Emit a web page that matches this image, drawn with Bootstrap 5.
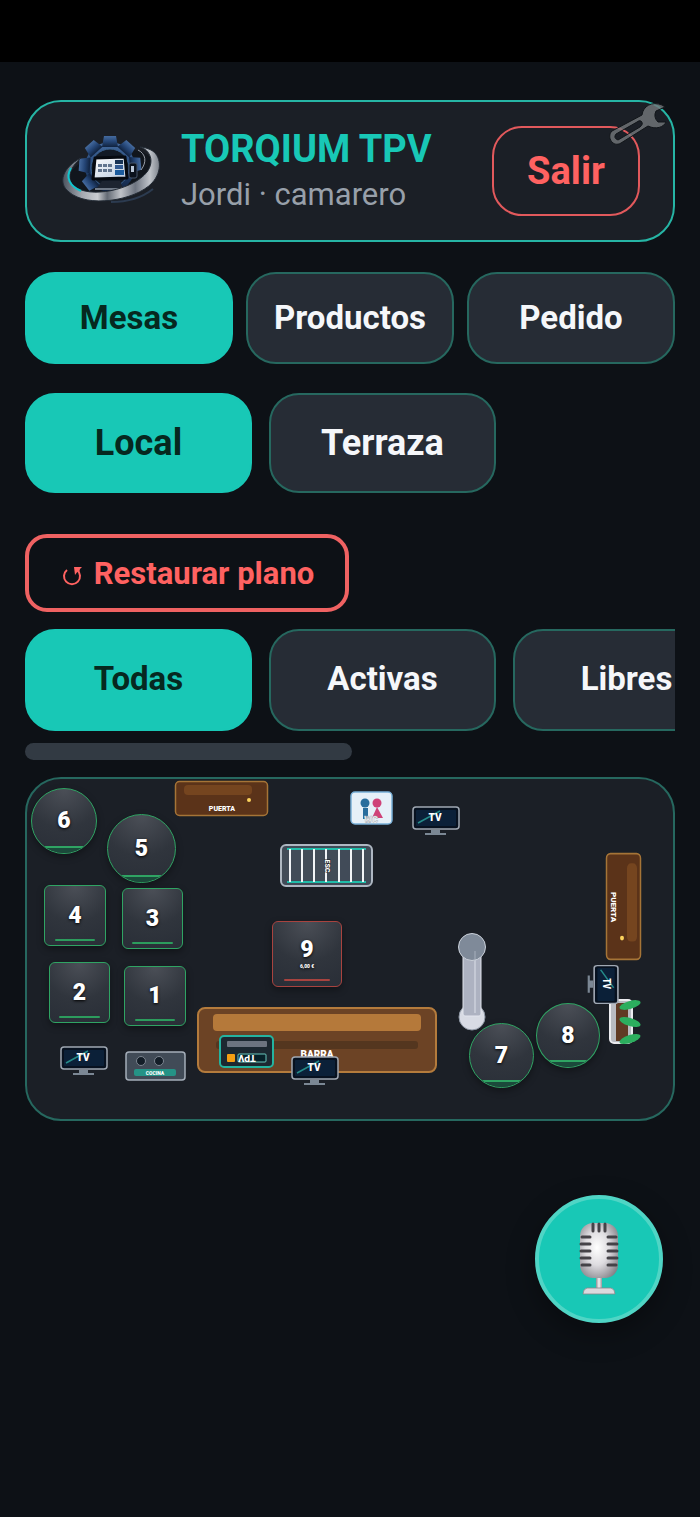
<!DOCTYPE html>
<html lang="es">
<head>
<meta charset="utf-8">
<meta name="viewport" content="width=device-width, initial-scale=1">
<title>TORQIUM TPV</title>
<link href="https://cdn.jsdelivr.net/npm/bootstrap@5.3.0/dist/css/bootstrap.min.css" rel="stylesheet">
<style>
  :root { --teal:#18c8b6; --red:#ff6261; --panel:#1b1f26; --btn:#262c35; --line:#26685f; }
  body { background:#0d1116; color:#f5f7fa; font-family:Roboto,"Liberation Sans",sans-serif; }
  .status-strip { height:62px; background:#000; }
  .page-body { padding:38px 25px 0; }
  .brand-bar { background:var(--panel); border:2px solid #26b5a5; border-radius:36px; padding:0 33px 0 34px; height:142px; margin-bottom:30px; }
  .brand-logo { width:100px; height:90px; flex:none; }
  .brand-title { color:var(--teal); font-size:38px; font-weight:700; line-height:44px; padding-top:4px; }
  .brand-user { color:#98a0aa; font-size:31px; line-height:48px; }
  .exit-btn { height:90px; width:148px; border:2px solid #e2595c; border-radius:30px; color:var(--red); font-size:38px; font-weight:700; padding:0; }
  .exit-btn:hover, .restore-btn:hover { color:var(--red); border-color:var(--red); }
  .wrench { top:0; right:4px; width:64px; height:50px; pointer-events:none; }
  .tile { background:var(--btn); border:2px solid var(--line); border-radius:30px; color:#f5f7fa; font-weight:700; padding:0; white-space:nowrap; }
  .tile:hover { background:var(--btn); border-color:var(--line); color:#f5f7fa; }
  .tile.active, .tile.active:hover { background:var(--teal); border-color:var(--teal); color:#06281f; }
  .main-tabs { gap:13px; margin-bottom:29px; }
  .main-tabs .tile { height:92px; font-size:33px; flex:1 1 0; }
  .pill-row { gap:17px; }
  .pill-row .tile { width:227px; flex:none; font-size:33px; }
  .zones { margin-bottom:41px; }
  .zones .tile { height:100px; font-size:36px; }
  .restore-btn { height:78px; width:324px; border:4px solid #ef6262; border-radius:22px; color:var(--red); font-size:31px; font-weight:700; margin-bottom:17px; padding:2px 0 0 2px; }
  .filters { overflow-x:auto; scrollbar-width:none; }
  .filters::-webkit-scrollbar { display:none; }
  .filters .tile { height:102px; padding-bottom:2px; }
  .scroll-thumb { width:327px; height:17px; border-radius:9px; background:#323a43; margin:12px 0 17px; }
  .floor { border:2px solid var(--line); border-radius:36px; background:var(--panel); height:344px; overflow:hidden; }
  .floor svg { width:646px; height:340px; }
  .floor text { font-family:Roboto,"Liberation Sans",sans-serif; font-weight:900; fill:#fff; text-anchor:middle; }
  .seat { position:absolute; left:var(--x); top:var(--y); width:var(--w); height:var(--h); border:1px solid #2fa463; border-radius:6px; padding:0; overflow:hidden; color:#fff; font-size:23px; font-weight:900; line-height:24px; text-shadow:0 1px 3px #000; background:radial-gradient(circle at 50% 0,#4b4f57 0,#30353d 55%,#292e37 100%); box-shadow:0 3px 7px rgba(0,0,0,.35); }
  .seat::after { content:""; position:absolute; left:16%; right:16%; bottom:4px; height:2px; border-radius:2px; background:#2c9c5d; }
  .seat.round-seat { border-radius:50%; }
  .seat.round-seat::after { left:0; right:0; bottom:0; height:7px; border-radius:0; border-top:2px solid #2fa463; background:#1b4a3b; }
  .seat.busy { border-color:#a8433f; }
  .seat.busy::after { background:#a8433f; bottom:5px; }
  .seat small { display:block; font-size:5px; line-height:8px; }
  .mic-btn { right:37px; bottom:194px; width:128px; height:128px; border:4px solid #4fd5c5; background:var(--teal); box-shadow:0 10px 28px rgba(0,0,0,.35); }
</style>
</head>
<body>
<div class="status-strip"></div>
<main class="page-body">
  <header class="brand-bar d-flex align-items-center position-relative">
    <svg class="brand-logo" viewBox="0 0 100 90" aria-hidden="true">
      <defs>
        <linearGradient id="steel" x1="0" y1="0" x2="1" y2="0">
          <stop offset="0" stop-color="#4b535e"/><stop offset=".2" stop-color="#a4a9b1"/><stop offset=".36" stop-color="#c9ccd0"/><stop offset=".46" stop-color="#636a74"/><stop offset=".6" stop-color="#c0c3c8"/><stop offset=".75" stop-color="#6d7480"/><stop offset=".9" stop-color="#c0c4ca"/><stop offset="1" stop-color="#7d838c"/>
        </linearGradient>
        <linearGradient id="blue" x1="0" y1="0" x2="0" y2="1"><stop offset="0" stop-color="#456b9f"/><stop offset=".5" stop-color="#254677"/><stop offset="1" stop-color="#10223e"/></linearGradient>
        <linearGradient id="face" x1="0" y1="0" x2="1" y2="1"><stop offset="0" stop-color="#fff"/><stop offset="1" stop-color="#b8c8dc"/></linearGradient>
      </defs>
      <ellipse cx="50" cy="49" rx="45" ry="24" transform="rotate(-14 50 49)" fill="#11161d"/>
      <g transform="translate(0 3)">
        <g fill="url(#blue)">
          <circle cx="49" cy="38" r="25"/>
          <path d="M43 7h12l2 11H41z"/><path d="M43 7h12l2 11H41z" transform="rotate(42 49 38)"/>
          <path d="M43 7h12l2 11H41z" transform="rotate(84 49 38)"/><path d="M43 7h12l2 11H41z" transform="rotate(-42 49 38)"/>
          <path d="M43 7h12l2 11H41z" transform="rotate(-86 49 38)"/><path d="M43 7h12l2 11H41z" transform="rotate(-128 49 38)"/>
        </g>
        <circle cx="49" cy="39" r="19" fill="#121a25" stroke="#3a628f"/>
        <path d="M41 52h18l3 7H36z" fill="#1d2430"/><path d="M34 60h34" stroke="#707986" stroke-width="2"/>
        <rect x="68" y="34" width="8" height="15" rx="2" fill="#0b121d" stroke="#46556a"/>
        <path d="M70 37h3v6h-3z" fill="#b9c6d7"/>
        <path d="M34 29l30-1 2 21-34 1z" fill="url(#face)" stroke="#060a10" stroke-width="3" stroke-linejoin="round"/>
        <g fill="#62758e"><path d="M37 35h4v3h-4zM42 35h4v3h-4zM47 35h4v3h-4zM37 40h4v3h-4zM42 40h4v3h-4zM47 40h4v3h-4z"/><path d="M54 31h8v4h-8z" fill="#173253"/><path d="M54 36h8v4h-8z" fill="#315a92"/><path d="M54 41h9v5h-9z" fill="#1b5b9c"/></g>
      </g>
      <path d="M20 32C2 41-4 57 8 66c18 16 66 9 83-9 11-12 9-28-1-33-4-2-8-3-11-3 10 3 15 14 7 25-14 18-58 27-73 14C5 53 9 41 20 32z" fill="url(#steel)" stroke="#242c36"/>
      <path d="M10 42c-6 10-1 18 10 23" fill="none" stroke="#0fc6cf" stroke-width="2"/>
      <path d="M77 24c8 4 9 12 3 20" fill="none" stroke="#979da7" stroke-width="1"/>
      <path d="M50 76c18 0 32-5 42-13" fill="none" stroke="#2c3b50" stroke-width="2"/>
    </svg>
    <div class="flex-grow-1 ps-3 ms-1">
      <div class="brand-title">TORQIUM TPV</div>
      <div class="brand-user">Jordi · camarero</div>
    </div>
    <button type="button" class="btn exit-btn">Salir</button>
    <svg class="wrench position-absolute" viewBox="0 0 64 50" aria-hidden="true">
      <path fill="#74787c" fill-opacity=".8" stroke="#111519" stroke-width="1" stroke-linejoin="round" fill-rule="evenodd" d="M7 29 37 13C38 4 47-1 57 3L60 5 51 9Q48 15 53 20L61 20C59 25 51 28 43 24L16 41C8 46 1 35 7 29ZM11 32Q8 36 13 38L35 25Q39 22 36 19Q34 18 32 20Z"/>
    </svg>
  </header>

  <nav class="main-tabs d-flex" aria-label="Secciones">
    <button type="button" class="btn tile active">Mesas</button>
    <button type="button" class="btn tile">Productos</button>
    <button type="button" class="btn tile">Pedido</button>
  </nav>

  <div class="zones pill-row d-flex">
    <button type="button" class="btn tile active">Local</button>
    <button type="button" class="btn tile">Terraza</button>
  </div>

  <button type="button" class="btn restore-btn d-flex align-items-center justify-content-center">
    <svg width="20" height="20" viewBox="0 0 20 20" class="me-2 mt-1" aria-hidden="true"><path d="M5 4a8 8 0 1 0 10 0" fill="none" stroke="currentColor" stroke-width="2"/><path d="M12 1h8l-2 2-1 4-1-2-3 4z" fill="currentColor"/></svg>
    <span class="ps-1">Restaurar plano</span>
  </button>

  <div class="filters pill-row d-flex">
    <button type="button" class="btn tile active">Todas</button>
    <button type="button" class="btn tile">Activas</button>
    <button type="button" class="btn tile">Libres</button>
  </div>
  <div class="scroll-thumb"></div>

  <section class="floor position-relative" aria-label="Plano del local">
    <svg class="d-block" viewBox="0 0 646 340">
      <defs>
        <g id="screen">
          <path d="M20 24h9v4h-9zM14 27h21v2H14z" fill="#7b8794"/>
          <rect x="2" y="1" width="46" height="22" rx="3" fill="#07111f" stroke="#a0a8b3" stroke-width="1.5"/>
          <rect x="5" y="4" width="40" height="16" rx="1" fill="#0b2038"/>
          <path d="M7 17 29 5" stroke="#258c8a" stroke-width="1.5"/>
          <text x="24" y="15" font-size="10">TV</text>
        </g>
        <g id="door">
          <rect x=".5" y=".5" width="92" height="34" rx="4" fill="#5b3319" stroke="#a57437" stroke-width="1.5"/>
          <rect x="9" y="4" width="68" height="10" rx="4" fill="#75451f"/>
          <circle cx="74" cy="19" r="2" fill="#fbd35d"/>
          <text x="47" y="30" font-size="7">PUERTA</text>
        </g>
      </defs>
      <use href="#door" x="148" y="2"/>
      <use href="#door" transform="translate(614 74) rotate(90) scale(1.15 1)"/>

      <g transform="translate(323 12)">
        <rect x="1" y="1" width="41" height="32" rx="4" fill="#e6f0f8" stroke="#79b0d8" stroke-width="1.5"/>
        <circle cx="15" cy="12" r="4.5" fill="#276d9d"/><path d="M13 17h5v11h-5z" fill="#276d9d"/>
        <circle cx="27" cy="12" r="4.5" fill="#cf4278"/><path d="m27 16 6 11H22z" fill="#cf4278"/>
        <text x="21" y="32" font-size="9" stroke="#b9bec4" stroke-width=".6">WC</text>
      </g>
      <use href="#screen" x="384" y="27"/>

      <g transform="translate(253 65)">
        <rect x="1" y="1" width="91" height="41" rx="5" fill="#414b58" stroke="#aeb7c2" stroke-width="2"/>
        <path d="M7 5h79M7 38h79" stroke="#20bca9" stroke-width="2"/>
        <path d="M10 5v33M22 5v33M34 5v33M46 5v33M59 5v33M71 5v33M83 5v33" stroke="#f0f3f7" stroke-width="2"/>
        <text transform="translate(45 22) rotate(90)" font-size="7" stroke="#1b1f26" stroke-width="1" paint-order="stroke">ESC</text>
      </g>

      <g transform="translate(170 228)">
        <rect x="1" y="1" width="238" height="64" rx="7" fill="#6c4325" stroke="#b47b3c" stroke-width="2"/>
        <rect x="16" y="7" width="208" height="17" rx="4" fill="#b5793a"/>
        <rect x="19" y="34" width="202" height="8" rx="3" fill="#54361f"/>
        <text x="120" y="51" font-size="10">BARRA</text>
        <rect x="23" y="29" width="53" height="31" rx="4" fill="#1c2831" stroke="#24b39f" stroke-width="2"/>
        <rect x="30" y="34" width="40" height="6" rx="1" fill="#6c7480"/>
        <rect x="30" y="47" width="8" height="8" rx="1" fill="#f59e12"/>
        <rect x="41" y="47" width="28" height="8" rx="1" fill="#062129" stroke="#68c6bc"/>
        <text transform="translate(50 48) rotate(180)" font-size="9">TPV</text>
      </g>
      <use href="#screen" x="263" y="277"/>
      <use href="#screen" x="32" y="267"/>

      <g transform="translate(98 272)">
        <rect x="1" y="1" width="59" height="28" rx="3" fill="#414b57" stroke="#a5aeb9" stroke-width="1.5"/>
        <circle cx="16" cy="10" r="4.5" fill="#141e28" stroke="#7c8590"/><circle cx="34" cy="10" r="4.5" fill="#141e28" stroke="#7c8590"/>
        <rect x="9" y="18" width="42" height="7" rx="2" fill="#259386"/>
        <text x="30" y="24" font-size="5">COCINA</text>
      </g>

      <g transform="translate(431 155)">
        <circle cx="14" cy="83" r="13" fill="#d8dbe4" stroke="#8f98a5"/>
        <rect x="5" y="17" width="18" height="65" rx="2" fill="#adb2c1" stroke="#e2e5ed"/>
        <path d="M17 17v62" stroke="#dce0e9"/>
        <circle cx="14" cy="13" r="13.5" fill="#7f8a99" stroke="#cbd1da"/>
        <path d="M17 17v8" stroke="#a8b0bd"/>
      </g>

      <g transform="translate(582 220)">
        <rect x="1" y="1" width="22" height="43" rx="4" fill="#b9bbc2" stroke="#ececf0" stroke-width="2"/>
        <rect x="7" y="4" width="12" height="38" fill="#603a24"/>
        <g fill="#2cae5e"><ellipse cx="21" cy="6" rx="11" ry="4" transform="rotate(-16 21 6)"/><ellipse cx="21" cy="23" rx="11" ry="4" transform="rotate(17 21 23)"/><ellipse cx="21" cy="40" rx="11" ry="4" transform="rotate(-18 21 40)"/></g>
      </g>
      <use href="#screen" transform="translate(592 185) rotate(90) scale(.82 1.08)"/>
    </svg>
    <button type="button" class="seat round-seat" style="--x:4px;--y:9px;--w:66px;--h:66px">6</button>
    <button type="button" class="seat round-seat" style="--x:80px;--y:35px;--w:69px;--h:69px">5</button>
    <button type="button" class="seat" style="--x:17px;--y:106px;--w:62px;--h:61px">4</button>
    <button type="button" class="seat" style="--x:95px;--y:109px;--w:61px;--h:61px">3</button>
    <button type="button" class="seat" style="--x:22px;--y:183px;--w:61px;--h:61px">2</button>
    <button type="button" class="seat" style="--x:97px;--y:187px;--w:62px;--h:60px">1</button>
    <button type="button" class="seat busy" style="--x:245px;--y:142px;--w:70px;--h:66px">9<small>6,00 €</small></button>
    <button type="button" class="seat round-seat" style="--x:442px;--y:244px;--w:65px;--h:65px">7</button>
    <button type="button" class="seat round-seat" style="--x:509px;--y:224px;--w:64px;--h:65px">8</button>
  </section>
</main>

<button type="button" class="mic-btn btn rounded-circle position-fixed d-flex align-items-center justify-content-center p-0" aria-label="Dictar pedido">
  <svg width="40" height="74" viewBox="0 0 40 74" aria-hidden="true">
    <defs>
      <radialGradient id="chrome" cx=".45" cy=".45" r=".7"><stop offset="0" stop-color="#fff"/><stop offset=".45" stop-color="#dedce0"/><stop offset="1" stop-color="#77747b"/></radialGradient>
      <linearGradient id="stem" x1="0" y1="0" x2="1" y2="0"><stop offset="0" stop-color="#8e8c91"/><stop offset=".5" stop-color="#f2f1f3"/><stop offset="1" stop-color="#99969c"/></linearGradient>
    </defs>
    <path d="M17 55h6v12h-6z" fill="url(#stem)"/>
    <path d="M8 66h24q4 1 4 6H4q0-5 4-6z" fill="#dbd9dd" stroke="#89878c" stroke-width=".8"/>
    <rect x="1" y="1" width="38" height="55" rx="13" fill="url(#chrome)"/>
    <path d="M14 2v7M20 2v7M26 2v7M3 15h8M2 22h9M2 29h9M2 36h9M3 43h8M37 15H29M38 22H29M38 29H29M38 36H29M37 43H29" stroke="#454348" stroke-width="3" stroke-linecap="round"/>
  </svg>
</button>
<script src="https://cdn.jsdelivr.net/npm/bootstrap@5.3.0/dist/js/bootstrap.bundle.min.js"></script>
</body>
</html>
